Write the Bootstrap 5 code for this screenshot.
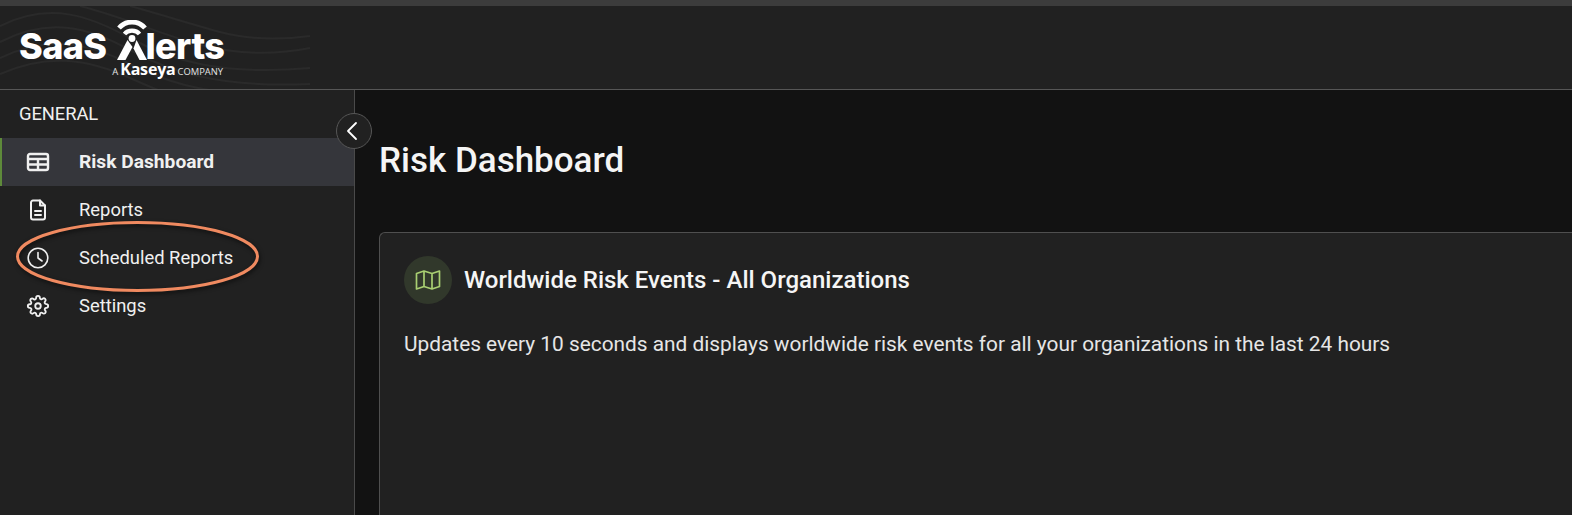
<!DOCTYPE html>
<html lang="en">
<head>
    <meta charset="UTF-8">
    <meta name="viewport" content="width=device-width, initial-scale=1.0">
    <title>Risk Dashboard</title>
    <link href="https://cdn.jsdelivr.net/npm/bootstrap@5.3.0/dist/css/bootstrap.min.css" rel="stylesheet">
    <style>
        html, body { height: 100%; }
        body {
            background: #121212;
            color: #f2f2f2;
            font-family: Roboto, "Liberation Sans", sans-serif;
            overflow: hidden;
        }
        .app-shell { height: 100vh; position: relative; }
        .top-strip { height: 6px; background: #3c3c3c; }
        .top-header {
            height: 84px;
            background: #212121;
            border-bottom: 1px solid #565656;
            position: relative;
            overflow: hidden;
        }
        .header-waves { position: absolute; left: 0; top: 0; }
        .brand-logo { position: relative; padding: 12px 0 0 19px; color: #fff; width: 240px; }
        .brand-row { display: flex; align-items: flex-end; height: 47px; font-family: Inter, sans-serif; font-weight: 800; font-size: 36px; line-height: 38px; letter-spacing: -.6px; }
        .brand-mark { margin: 0 -1px 5px 10px; flex: none; }
        .brand-sub { display: flex; align-items: baseline; justify-content: flex-end; gap: 2px; padding-right: 17px; margin-top: -4px; font-family: "Open Sans", sans-serif; font-size: 9.400px; line-height: 17px; color: #e4e4e4; }
        .brand-sub b { font-size: 16px; color: #fff; font-weight: 700; letter-spacing: -.2px; }
        .side-pane { width: 355px; flex: none; background: #212121; border-right: 1px solid #4a4a4a; }
        .side-title { height: 48px; padding: 14px 0 0 19px; font-size: 18.400px; line-height: 20px; letter-spacing: -.1px; color: #f0f0f0; }
        .side-item {
            height: 48px;
            padding: 0 0 0 24px;
            color: #f0f0f0;
            font-size: 18.400px;
            border-left: 2px solid transparent;
            text-decoration: none;
        }
        .side-item svg { width: 24px; height: 24px; margin-right: 29px; flex: none; }
        .side-item.is-active { background: #35363b; border-left-color: #5e8a3a; font-weight: 700; font-size: 19.200px; }
        .collapse-btn {
            position: absolute;
            left: 336px;
            top: 113px;
            width: 36px;
            height: 36px;
            padding: 0 4px 0 0;
            border-radius: 50%;
            background: #212121;
            border: 1px solid #565656;
        }
        .main-pane { background: #121212; padding: 0 0 0 24px; min-width: 0; }
        .page-heading { font-size: 35px; font-weight: 500; line-height: 40px; color: #f5f5f5; margin: 51px 0 51px; }
        .risk-card {
            background: #212121;
            border: 1px solid #4f4f4f;
            border-right: 0;
            border-bottom: 0;
            border-radius: 6px 0 0 0;
            color: #f2f2f2;
            padding: 23px 24px;
        }
        .map-badge { width: 48px; height: 48px; border-radius: 50%; background: #31382b; flex: none; }
        .risk-title { font-size: 24px; font-weight: 500; line-height: 48px; margin: 0 0 0 12px; color: #f5f5f5; }
        .risk-text { font-size: 20.850px; line-height: 28px; margin: 26px 0 0; color: #e6e6e6; }
        .note-ring { position: absolute; left: 0; top: 0; pointer-events: none; filter: drop-shadow(1px 2px 2px rgba(0,0,0,.6)); }
    </style>
</head>
<body>
    <div class="app-shell d-flex flex-column">
        <div class="top-strip"></div>
        <header class="top-header">
            <svg class="header-waves" width="330" height="84" fill="none" stroke="#2a2a2a" stroke-width="2">
                <path d="M0 20C50 -5 90 10 130 32S220 70 310 62"/>
                <path d="M0 36C50 10 90 22 130 44S220 82 310 78"/>
                <path d="M0 52C50 28 90 38 130 58S200 84 240 88"/>
                <path d="M0 68C50 46 90 54 130 72S170 88 190 92"/>
                <path d="M80 0C120 10 150 24 190 36S270 50 310 42"/>
                <path d="M130 0C160 8 190 18 220 26S280 34 310 30"/>
            </svg>
            <div class="brand-logo">
                <div class="brand-row">
                    <span>SaaS</span>
                    <svg class="brand-mark" width="30" height="40" viewBox="0 0 30 40" fill="none">
                        <path d="M2 8C9 0 21 0 28 8" stroke="#fff" stroke-width="4.800"/>
                        <path d="M7.500 14C11 9.500 19 9.500 22.500 14" stroke="#fff" stroke-width="4.200"/>
                        <circle cx="15" cy="18.500" r="3.400" fill="#fff"/>
                        <path d="M10.500 20 15.500 27 8.500 40H0Z" fill="#fff"/>
                        <path d="M19.500 20 30 40H22.500L16.500 28.500Z" fill="#fff"/>
                    </svg>
                    <span>lerts</span>
                </div>
                <div class="brand-sub"><span>A</span><b>Kaseya</b><span>COMPANY</span></div>
            </div>
        </header>
        <div class="d-flex flex-grow-1" style="min-height:0">
            <aside class="side-pane">
                <div class="side-title">GENERAL</div>
                <nav class="nav flex-column">
                    <a class="nav-link side-item is-active d-flex align-items-center" href="#">
                        <svg viewBox="0 0 24 24" fill="none" stroke="#f0f0f0" stroke-width="2.400" stroke-linejoin="round"><rect x="2" y="4" width="20" height="16" rx="2"/><path d="M2.500 9h19M2.500 14.500h19M12 9v11"/></svg>
                        Risk Dashboard
                    </a>
                    <a class="nav-link side-item d-flex align-items-center" href="#">
                        <svg viewBox="0 0 24 24" fill="none" stroke="#f0f0f0" stroke-width="2" stroke-linecap="round" stroke-linejoin="round"><path d="M14 2.500H7a2 2 0 0 0-2 2v15a2 2 0 0 0 2 2h10a2 2 0 0 0 2-2V7.500z"/><path d="M14 2.500v5h5M9 13h6M9 17h6"/></svg>
                        Reports
                    </a>
                    <a class="nav-link side-item d-flex align-items-center" href="#">
                        <svg viewBox="0 0 24 24" fill="none" stroke="#f0f0f0" stroke-width="1.600" stroke-linecap="round" stroke-linejoin="round"><circle cx="12" cy="12" r="9.800"/><path d="M12 6.500V12l4 3"/></svg>
                        Scheduled Reports
                    </a>
                    <a class="nav-link side-item d-flex align-items-center" href="#">
                        <svg viewBox="-1 -1 26 26" fill="none" stroke="#f0f0f0" stroke-width="2" stroke-linecap="round" stroke-linejoin="round"><circle cx="12" cy="12" r="3"/><path d="M19.400 15a1.650 1.650 0 0 0 .33 1.820l.06.06a2 2 0 1 1-2.830 2.830l-.06-.06a1.650 1.650 0 0 0-2.800 1.170V21a2 2 0 1 1-4 0v-.09a1.650 1.650 0 0 0-2.820-1.170l-.06.06a2 2 0 1 1-2.830-2.830l.06-.06a1.650 1.650 0 0 0-1.170-2.800H3a2 2 0 1 1 0-4h.09a1.650 1.650 0 0 0 1.170-2.820l-.06-.06a2 2 0 1 1 2.830-2.830l.06.06a1.650 1.650 0 0 0 1.820.33H9a1.650 1.650 0 0 0 1-1.510V3a2 2 0 1 1 4 0v.09a1.650 1.650 0 0 0 2.820 1.170l.06-.06a2 2 0 1 1 2.830 2.830l-.06.06a1.650 1.650 0 0 0-.33 1.820V9a1.650 1.650 0 0 0 1.510 1H21a2 2 0 1 1 0 4h-.09a1.650 1.650 0 0 0-1.510 1z"/></svg>
                        Settings
                    </a>
                </nav>
            </aside>
            <main class="main-pane flex-grow-1 d-flex flex-column">
                <h1 class="page-heading">Risk Dashboard</h1>
                <section class="card risk-card flex-grow-1">
                    <div class="d-flex align-items-center">
                        <div class="map-badge d-flex align-items-center justify-content-center">
                            <svg width="26" height="22" viewBox="0 0 26 22" fill="none" stroke="#a9cf72" stroke-width="1.700" stroke-linejoin="round"><path d="M1.500 4.500 9 2l8 2.500L24.500 2v15.500L17 20l-8-2.500L1.500 20zM9 2v15.500M17 4.500V20"/></svg>
                        </div>
                        <h2 class="risk-title">Worldwide Risk Events - All Organizations</h2>
                    </div>
                    <p class="risk-text">Updates every 10 seconds and displays worldwide risk events for all your organizations in the last 24 hours</p>
                </section>
            </main>
        </div>
        <button class="btn collapse-btn d-flex align-items-center justify-content-center" type="button" aria-label="Collapse sidebar">
            <svg width="14" height="20" viewBox="0 0 14 20" fill="none" stroke="#fff" stroke-width="1.800" stroke-linecap="round" stroke-linejoin="round"><path d="M11 2 3 10l8 8"/></svg>
        </button>
        <!-- hand drawn annotation round the Scheduled Reports item -->
        <svg class="note-ring" width="300" height="320" fill="none">
            <ellipse cx="137.500" cy="256.500" rx="120" ry="34" stroke="#f08a60" stroke-width="3"/>
        </svg>
    </div>
    <script src="https://cdn.jsdelivr.net/npm/bootstrap@5.3.0/dist/js/bootstrap.bundle.min.js"></script>
</body>
</html>
